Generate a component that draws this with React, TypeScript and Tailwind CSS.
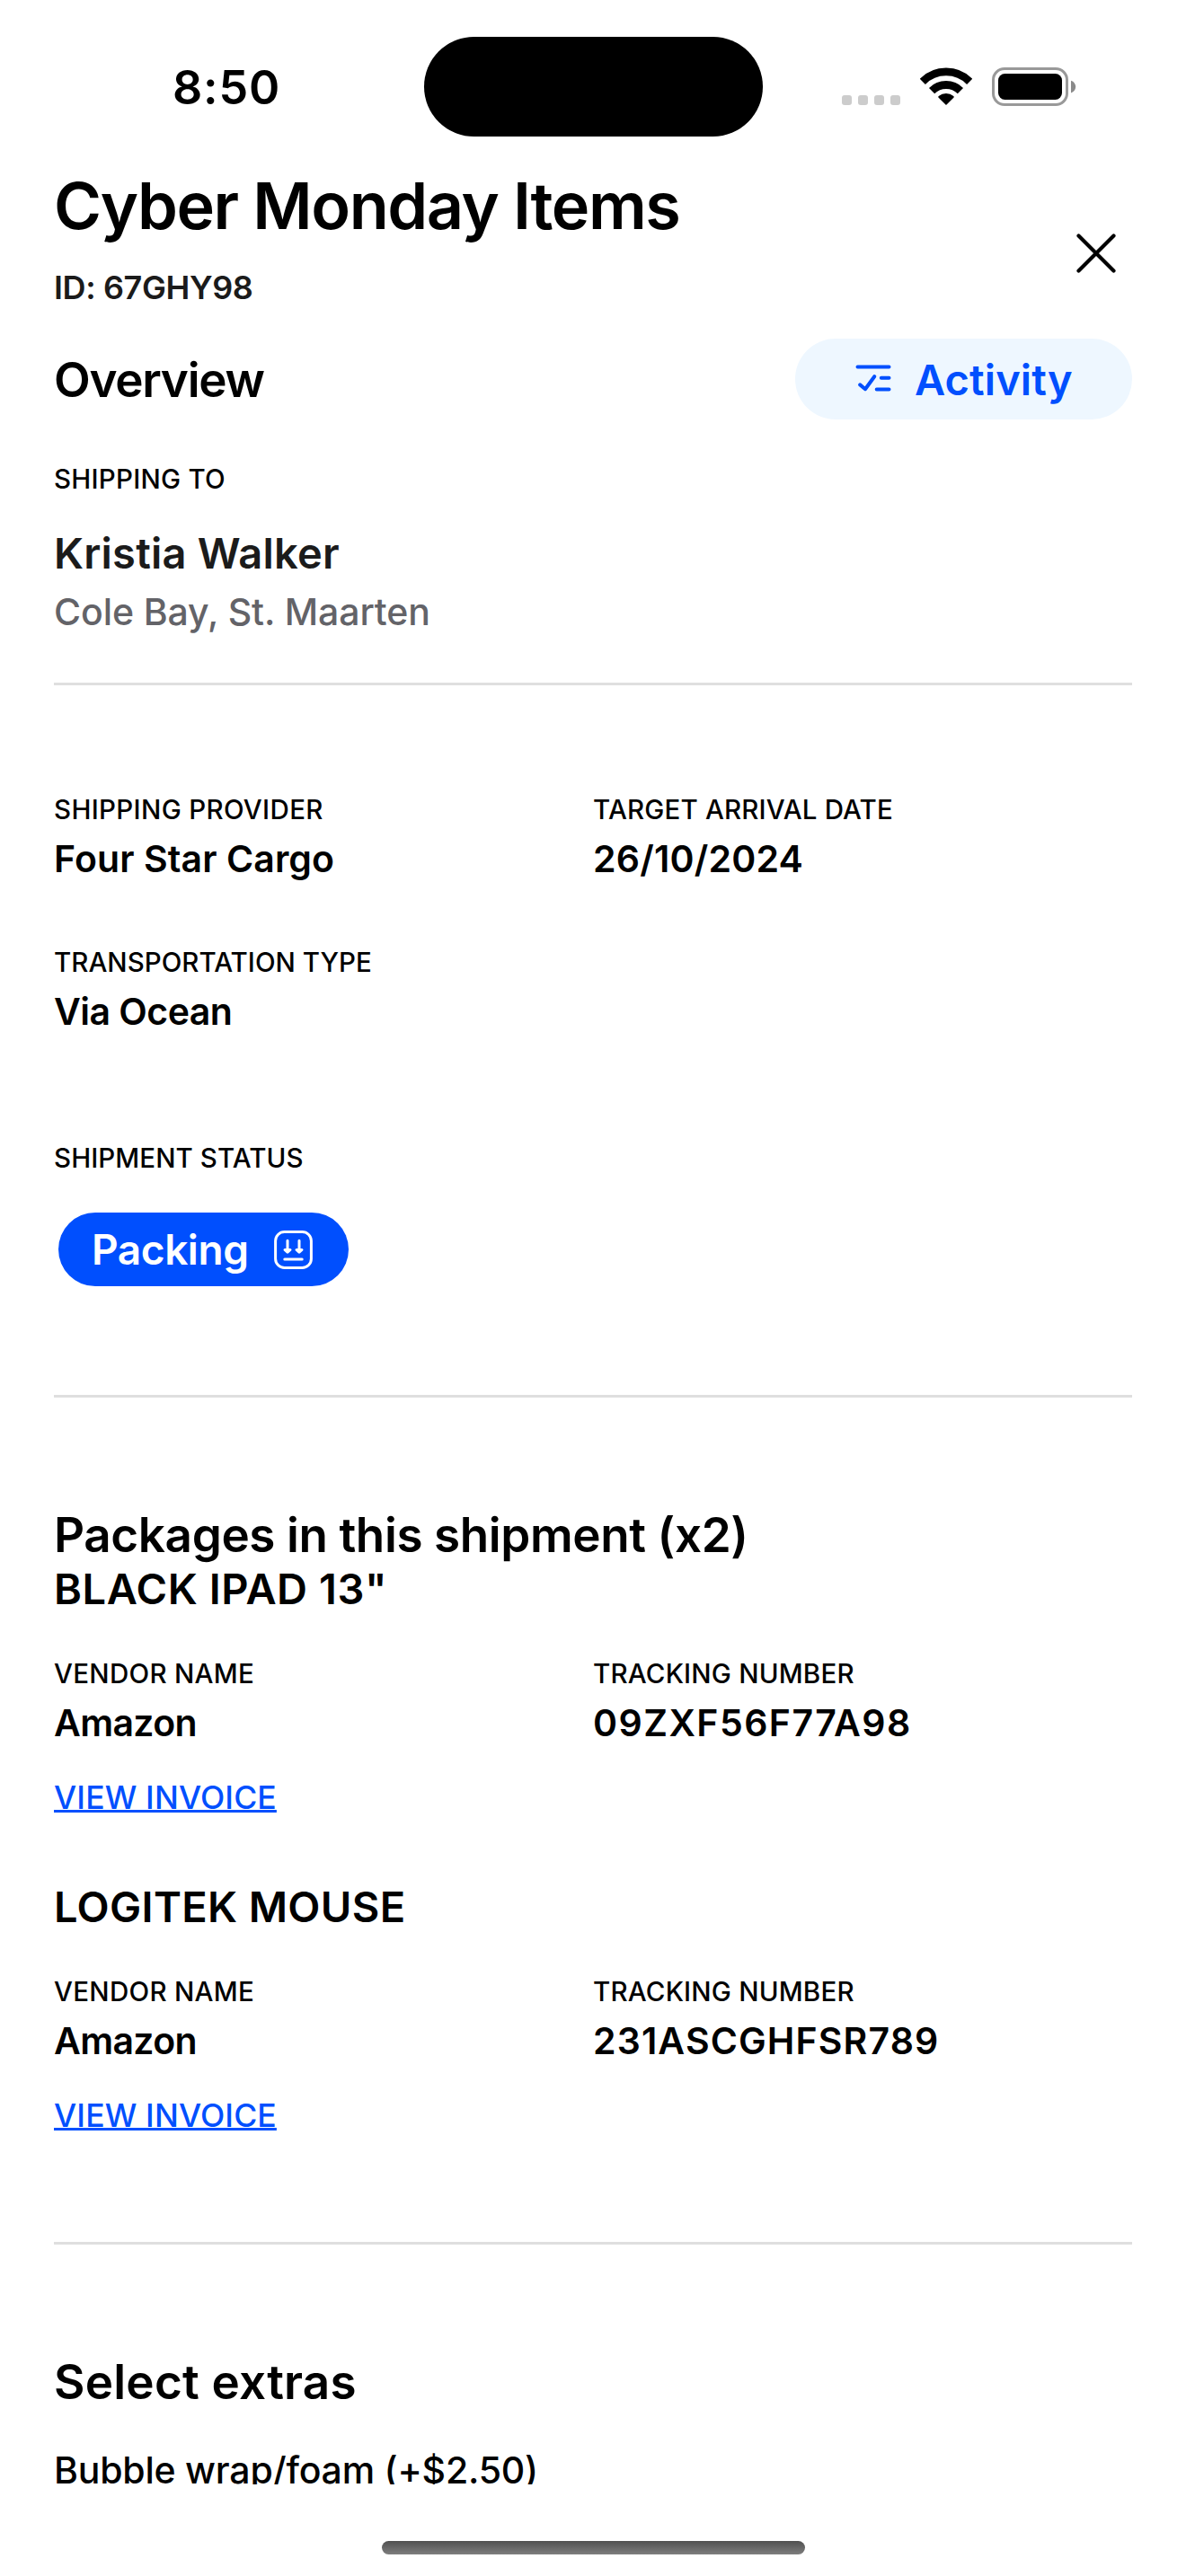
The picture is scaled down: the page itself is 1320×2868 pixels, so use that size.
import type { ReactNode } from "react";

const WifiIcon = () => (
  <svg className="ml-[22px] h-[43px] w-[58px] shrink-0" viewBox="0 0 58 43" fill="none">
    <path d="M2.8 15.8A37 37 0 0 1 55.2 15.8" stroke="#000" strokeWidth="8.8" />
    <path d="M13.1 26.1A22.5 22.5 0 0 1 44.9 26.1" stroke="#000" strokeWidth="8.8" />
    <path d="M20.4 33.4Q19.9 32.5 20.7 31.9A13.2 13.2 0 0 1 37.3 31.9Q38.1 32.5 37.6 33.4L29 42Z" fill="#000" />
  </svg>
);

const BatteryIcon = () => (
  <svg className="ml-[22px] h-[43px] w-[94px] shrink-0" viewBox="0 0 94 43" fill="none">
    <rect x="1.5" y="1.5" width="82" height="40" rx="12.5" stroke="#999" strokeWidth="3" />
    <rect x="7" y="7" width="71" height="29" rx="7.5" fill="#000" />
    <path d="M88 14.7C91.3 15.8 93.2 18.5 93.2 21.6C93.2 24.7 91.3 27.3 88 28.4Z" fill="#8a8a8a" />
  </svg>
);

const CloseIcon = () => (
  <svg className="h-11 w-11" viewBox="0 0 44 44" fill="none" stroke="#000" strokeWidth="4.2" strokeLinecap="round">
    <path d="M2.5 2.5L41.5 41.5M41.5 2.5L2.5 41.5" />
  </svg>
);

const ChecklistIcon = () => (
  <svg className="mb-[3px] h-[30px] w-10 shrink-0" viewBox="0 0 40 30" fill="none" stroke="#004ffe" strokeWidth="4" strokeLinecap="round" strokeLinejoin="round">
    <path d="M2.5 2.5H37.5M28.8 14.8H37.5M23.7 27.4H37.5M5.2 22.4L11 27.2L21.2 13.2" />
  </svg>
);

const PackingIcon = () => (
  <svg className="h-[43px] w-[43px] shrink-0" viewBox="0 0 43 43" fill="none" stroke="#fff" strokeWidth="3" strokeLinecap="round" strokeLinejoin="round">
    <rect x="1.6" y="1.6" width="39.8" height="39.8" rx="10" />
    <path d="M15 11.2V23M28 11.2V23M11.8 32H31.2" />
    <path d="M12 21.4L15 24.2L18 21.4ZM25 21.4L28 24.2L31 21.4Z" fill="#fff" />
  </svg>
);

const Label = ({ children, className }: { children: ReactNode; className: string }) => (
  <p className={`text-[29.5px] leading-9 font-[470] whitespace-nowrap ${className}`}>{children}</p>
);

const Value = ({ children, className }: { children: ReactNode; className: string }) => (
  <p className={`mt-[11px] text-[41px] leading-[52px] font-semibold whitespace-nowrap ${className}`}>{children}</p>
);

const Divider = ({ className }: { className: string }) => <div className={`h-[3px] shrink-0 bg-[#dfdfdf] ${className}`} />;

const Package = ({ title, titleClass, vendor, tracking, trackingClass }: {
  title: string;
  titleClass: string;
  vendor: string;
  tracking: string;
  trackingClass: string;
}) => (
  <article>
    <h3 className={`text-[47px] leading-[60px] font-[570] whitespace-nowrap ${titleClass}`}>{title}</h3>
    <div className="mt-[46px] grid grid-cols-2">
      <div>
        <Label className="tracking-[0.3px]">VENDOR NAME</Label>
        <Value className="tracking-[-0.64px]">{vendor}</Value>
      </div>
      <div>
        <Label className="tracking-[0.2px]">TRACKING NUMBER</Label>
        <Value className={trackingClass}>{tracking}</Value>
      </div>
    </div>
    <a className="mt-9 mb-[-1px] block w-fit text-[35.5px] leading-[44px] font-[480] tracking-[0.15px] whitespace-nowrap text-[#004ffe] underline decoration-[3px] underline-offset-[1px] [text-decoration-skip-ink:none]">
      VIEW INVOICE
    </a>
  </article>
);

const StatusBar = () => (
  <div className="grid h-[184px] shrink-0 grid-cols-[472px_377px_471px]">
    <div className="pt-[68px] pl-[192px] text-[52px] leading-[60px] font-semibold tracking-[0.81px]">8:50</div>
    <div className="mt-[41px] h-[111px] rounded-full bg-black" />
    <div className="mt-[75px] flex h-[43px] items-end pl-[88px]">
      <div className="mb-px flex gap-[7px]">
        {[0, 1, 2, 3].map((i) => (
          <span key={i} className="h-[11px] w-[11px] rounded-[3px] bg-[#ccc]" />
        ))}
      </div>
      <WifiIcon />
      <BatteryIcon />
    </div>
  </div>
);

export default function App() {
  return (
    <div className="flex h-[2868px] w-[1320px] flex-col overflow-hidden bg-white font-['Inter',sans-serif] text-black">
      <StatusBar />
      <main className="h-[2582px] shrink-0 overflow-hidden px-[60px]">
        <header className="flex items-center justify-between">
          <div>
            <h1 className="text-[72px] leading-[90px] font-[570] tracking-[-1.46px] whitespace-nowrap">Cyber Monday Items</h1>
            <p className="mt-6 text-[36px] leading-[44px] font-[570] tracking-[-0.4px] whitespace-nowrap text-[#1b1b1b]">ID: 67GHY98</p>
          </div>
          <button className="mt-[38px] mr-[18px]" aria-label="Close">
            <CloseIcon />
          </button>
        </header>

        <div className="mt-[35px] flex items-center justify-between">
          <h2 className="pt-px text-[53px] leading-[60px] font-[570] tracking-[-1.3px]">Overview</h2>
          <button className="flex h-[90px] w-[375px] items-center rounded-full bg-[#eef7ff] pl-[67px] text-[#004ffe]">
            <ChecklistIcon />
            <span className="ml-[26px] pt-px text-[47px] leading-[60px] font-[570] tracking-[0.1px]">Activity</span>
          </button>
        </div>

        <section>
          <Label className="mt-12 tracking-[0.25px]">SHIPPING TO</Label>
          <p className="mt-[35px] text-[47px] leading-[60px] font-[570] tracking-[0.22px] text-[#1b1b1b]">Kristia Walker</p>
          <p className="mt-[9px] text-[41px] leading-[52px] font-[470] tracking-[-0.09px] text-[#636368]">Cole Bay, St. Maarten</p>
        </section>

        <Divider className="mt-[53px]" />

        <section className="mt-[120px] grid grid-cols-2 gap-y-[71px]">
          <div>
            <Label className="tracking-[0.34px]">SHIPPING PROVIDER</Label>
            <Value className="tracking-[0.1px]">Four Star Cargo</Value>
          </div>
          <div>
            <Label className="tracking-[0.17px]">TARGET ARRIVAL DATE</Label>
            <Value className="tracking-[0.2px]">26/10/2024</Value>
          </div>
          <div>
            <Label className="tracking-[0.02px]">TRANSPORTATION TYPE</Label>
            <Value className="tracking-[-0.53px]">Via Ocean</Value>
          </div>
        </section>

        <section className="mt-[119px]">
          <Label className="tracking-[0.08px]">SHIPMENT STATUS</Label>
          <div className="mt-[43px] ml-[5px] flex h-[82px] w-[323px] items-center justify-between rounded-full bg-[#004ffe] pr-10 pl-[37px] text-white">
            <span className="text-[46px] leading-[60px] font-[570] tracking-[-0.45px]">Packing</span>
            <PackingIcon />
          </div>
        </section>

        <Divider className="mt-[121px]" />

        <section className="mt-[123px]">
          <h2 className="text-[53px] leading-[60px] font-[570] tracking-[-0.4px] whitespace-nowrap">Packages in this shipment (x2)</h2>
          <div className="flex flex-col gap-[70px]">
            <Package title={'BLACK IPAD 13"'} titleClass="tracking-[0.55px]" vendor="Amazon" tracking="09ZXF56F77A98" trackingClass="tracking-[1.46px]" />
            <Package title="LOGITEK MOUSE" titleClass="tracking-[0.34px]" vendor="Amazon" tracking="231ASCGHFSR789" trackingClass="tracking-[1.13px]" />
          </div>
        </section>

        <Divider className="mt-[119px]" />

        <section className="mt-[123px]">
          <h2 className="text-[53px] leading-[60px] font-[570] tracking-[0.22px]">Select extras</h2>
          <p className="mt-[42px] text-[41px] leading-[52px] font-[450] tracking-[-0.22px] whitespace-nowrap">Bubble wrap/foam (+$2.50)</p>
        </section>
      </main>
      <div className="mx-auto mt-[63px] h-[15px] w-[471px] shrink-0 rounded-full bg-linear-to-b from-[#505050] to-[#7e7e7e]" />
    </div>
  );
}
